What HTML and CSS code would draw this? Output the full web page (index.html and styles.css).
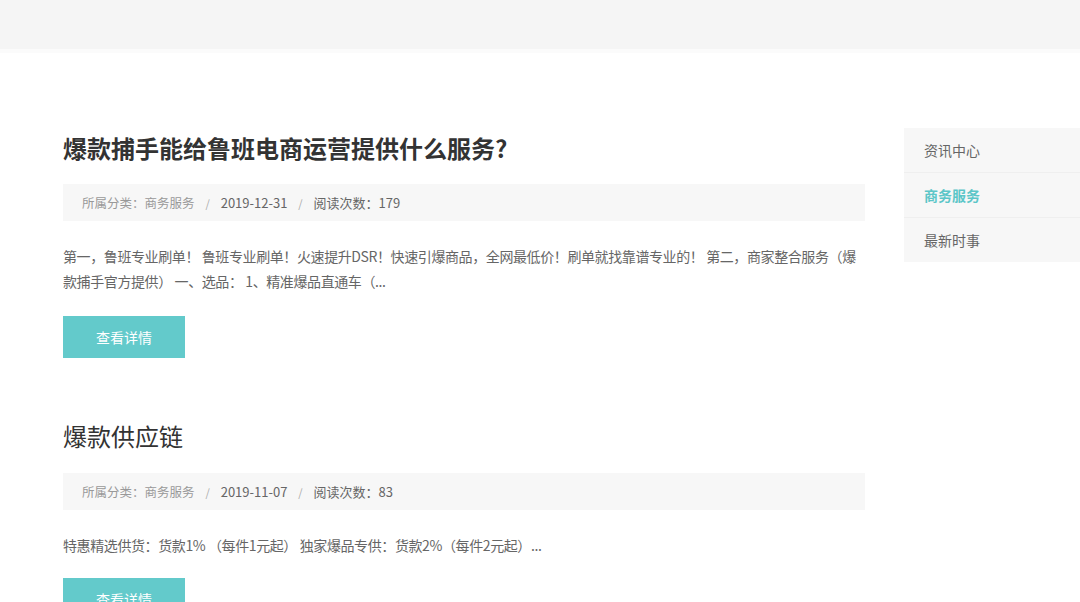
FILE: index.html
```html
<!DOCTYPE html>
<html lang="zh-CN">
<head>
  <meta charset="UTF-8" />
  <meta name="viewport" content="width=device-width, initial-scale=1" />
  <title>商务服务</title>
  <link rel="stylesheet" href="styles.css">
</head>
<body>
  <div class="top-bar"></div>

  <div class="page">
    <div class="main">
      <div class="article">
        <h2 class="title bold">爆款捕手能给鲁班电商运营提供什么服务?</h2>
        <div class="meta">
          <span class="label">所属分类：商务服务</span>
          <span class="sep">/</span>
          <span class="value">2019-12-31</span>
          <span class="sep">/</span>
          <span class="value">阅读次数：179</span>
        </div>
        <p class="summary">第一，鲁班专业刷单！ 鲁班专业刷单！火速提升DSR！快速引爆商品，全网最低价！刷单就找靠谱专业的！ 第二，商家整合服务（爆款捕手官方提供） 一、选品： 1、精准爆品直通车（...</p>
        <button class="more">查看详情</button>
      </div>

      <div class="article">
        <h2 class="title">爆款供应链</h2>
        <div class="meta">
          <span class="label">所属分类：商务服务</span>
          <span class="sep">/</span>
          <span class="value">2019-11-07</span>
          <span class="sep">/</span>
          <span class="value">阅读次数：83</span>
        </div>
        <p class="summary">特惠精选供货：货款1% （每件1元起） 独家爆品专供：货款2%（每件2元起）...</p>
        <button class="more">查看详情</button>
      </div>
    </div>

    <div class="sidebar">
      <a class="side-item">资讯中心</a>
      <a class="side-item active">商务服务</a>
      <a class="side-item">最新时事</a>
    </div>
  </div>
</body>
</html>
```

FILE: styles.css
```css
body {
  font-family: "Noto Sans CJK SC", "Liberation Sans", sans-serif;
  background: #fff;
  margin: 0;
  padding: 0;
  overflow: hidden;
}
.top-bar {
  height: 49px;
  background: #f5f5f5;
  border-bottom: 4px solid #fbfbfb;
}
.page {
  display: flex;
  gap: 39px;
  padding: 75px 0 0 63px;
}
.main {
  width: 802px;
  flex: none;
}
.article {
  margin-bottom: 58px;
}
.title {
  font-size: 24px;
  font-weight: normal;
  line-height: 40px;
  color: #333;
  margin: 0 0 17px;
}
.title.bold {
  font-weight: bold;
  margin-bottom: 16px;
}
.meta {
  background: #f7f7f7;
  height: 37px;
  line-height: 37px;
  padding: 0 19px;
  font-size: 13px;
  color: #666;
}
.meta .label {
  color: #999;
  font-size: 12.5px;
}
.meta .sep {
  color: #aaa;
  margin: 0 8px;
  font-size: 11px;
}
.summary {
  font-size: 14px;
  line-height: 25px;
  letter-spacing: -0.4px;
  color: #666;
  margin: 23px 0 22px;
}
.article:last-child .summary {
  margin-bottom: 20px;
}
.more {
  width: 122px;
  height: 42px;
  background: #63cacb;
  color: #fff;
  border: none;
  font-family: inherit;
  font-size: 14px;
  cursor: pointer;
}
.more:hover {
  opacity: 0.9;
}
.sidebar {
  flex: 1;
  background: #f7f7f7;
  align-self: flex-start;
}
.side-item {
  display: block;
  height: 44px;
  line-height: 44px;
  padding-left: 20px;
  font-size: 14px;
  color: #666;
  border-bottom: 1px solid #efefef;
}
.side-item:last-child {
  border-bottom: none;
}
.side-item.active {
  color: #5cc6c8;
  font-weight: bold;
}
```
